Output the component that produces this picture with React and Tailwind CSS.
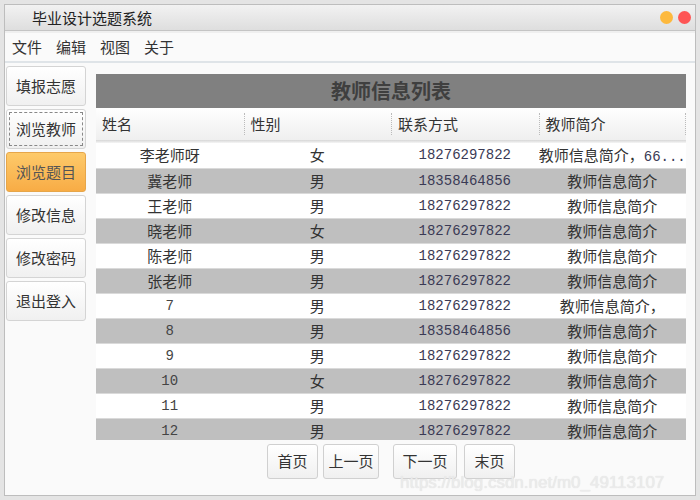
import React from 'react'

const cjk = { fontFamily: '"Noto Sans CJK SC", "Liberation Sans", sans-serif' }
const mono = { fontFamily: '"Liberation Mono", "Noto Sans CJK SC", monospace' }

const teachers = [
  { name: '李老师呀', sex: '女', phone: '18276297822', intro: '教师信息简介，', more: '66...' },
  { name: '冀老师', sex: '男', phone: '18358464856', intro: '教师信息简介' },
  { name: '王老师', sex: '男', phone: '18276297822', intro: '教师信息简介' },
  { name: '晓老师', sex: '女', phone: '18276297822', intro: '教师信息简介' },
  { name: '陈老师', sex: '男', phone: '18276297822', intro: '教师信息简介' },
  { name: '张老师', sex: '男', phone: '18276297822', intro: '教师信息简介' },
  { name: '7', sex: '男', phone: '18276297822', intro: '教师信息简介，' },
  { name: '8', sex: '男', phone: '18358464856', intro: '教师信息简介' },
  { name: '9', sex: '男', phone: '18276297822', intro: '教师信息简介' },
  { name: '10', sex: '女', phone: '18276297822', intro: '教师信息简介' },
  { name: '11', sex: '男', phone: '18276297822', intro: '教师信息简介' },
  { name: '12', sex: '男', phone: '18276297822', intro: '教师信息简介' },
]

const navItems = ['填报志愿', '浏览教师', '浏览题目', '修改信息', '修改密码', '退出登入']

export default function App() {
  return (
    <div className="w-[700px] h-[500px] bg-[#e4e4e4] p-[4px] text-[#333]" style={cjk}>
      <div className="relative h-full border border-[#bdbdbd] bg-[#fafafa] flex flex-col overflow-hidden">
        {/* 标题栏 */}
        <div className="h-[26px] shrink-0 flex items-center justify-between border-b border-[#c4c4c4] bg-gradient-to-b from-[#f2f2f2] to-[#dedede]">
          <span className="pl-[27px] text-[15px] text-[#222] leading-none">毕业设计选题系统</span>
          <div className="flex items-center gap-[5px] pr-[4px]">
            <span className="w-[13px] h-[13px] rounded-full bg-[#fdb93d]" />
            <span className="w-[13px] h-[13px] rounded-full bg-[#fe5555]" />
          </div>
        </div>

        {/* 菜单栏 */}
        <div className="h-[32px] shrink-0 flex items-center gap-[14px] pl-[7px] border-t-2 border-t-[#efefef] border-b-2 border-b-[#dfe4e8] text-[15px] text-[#333]">
          <span>文件</span>
          <span>编辑</span>
          <span>视图</span>
          <span>关于</span>
        </div>

        {/* 主体 */}
        <div className="flex-1 flex pl-[1px]">
          <div className="w-[80px] shrink-0 flex flex-col gap-[3px] pt-[3px]">
            {navItems.map((item, i) => (
              <NavButton key={item} label={item} focused={i === 1} active={i === 2} />
            ))}
          </div>

          <div className="flex-1 ml-[10px] mr-[9px] mt-[11px] flex flex-col">
            <div className="h-[34px] bg-[#808080] flex items-center justify-center text-[20px] font-bold text-[#3f3f3f]">
              教师信息列表
            </div>
            <div className="h-[32px] grid grid-cols-4 bg-gradient-to-b from-[#ffffff] to-[#efefef] text-[15px] text-[#333]">
              {['姓名', '性别', '联系方式', '教师简介'].map((h, i) => (
                <div key={h} className="flex items-center">
                  {i > 0 && <span className="h-[22px] border-l border-dotted border-[#bbbbbb]" />}
                  <span className="pl-[6px]">{h}</span>
                  {i === 3 && <span className="ml-auto h-[22px] border-l border-dotted border-[#bbbbbb]" />}
                </div>
              ))}
            </div>
            <div className="h-[3px] bg-gradient-to-b from-[#d6d6d6] to-[#f6f6f6]" />
            <div className="h-[297px] overflow-hidden">
              {teachers.map((t, i) => {
                const numeric = /^\d+$/.test(t.name)
                return (
                  <div
                    key={i}
                    className={`h-[25px] grid grid-cols-4 items-center text-[15px] ${i % 2 ? 'bg-[#bfbfbf]' : 'bg-white'} ${i === 0 ? '' : 'border-t border-[#dadada]'}`}
                  >
                    <div className={numeric ? 'text-center text-[14px] text-[#444]' : 'text-center'} style={numeric ? mono : undefined}>
                      {t.name}
                    </div>
                    <div className="text-center">{t.sex}</div>
                    <div className="text-center text-[14px] text-[#3a3a55]" style={mono}>{t.phone}</div>
                    <div className="text-center whitespace-nowrap overflow-hidden">
                      {t.intro}
                      {t.more && <span className="text-[14px] text-[#3a3a55]" style={mono}>{t.more}</span>}
                    </div>
                  </div>
                )
              })}
            </div>

            <div className="flex justify-center pt-[4px] text-[15px] text-[#333]">
              <PageButton label="首页" w="w-[51px]" />
              <PageButton label="上一页" w="w-[56px] ml-[5px]" />
              <PageButton label="下一页" w="w-[64px] ml-[14px]" />
              <PageButton label="末页" w="w-[51px] ml-[7px]" />
            </div>
          </div>
        </div>

        <span
          className="absolute left-[395px] top-[465px] text-[17px] text-[#ebebeb] whitespace-nowrap pointer-events-none"
          style={{ fontFamily: '"Liberation Sans", sans-serif', textShadow: '0 0 1px #dcdcdc' }}
        >
          https://blog.csdn.net/m0_49113107
        </span>
      </div>
    </div>
  )
}

function NavButton({ label, focused, active }) {
  if (active) {
    return (
      <div className="h-[40px] rounded-[3px] border border-[#e6a64a] bg-gradient-to-b from-[#fdca6a] to-[#f8ac45] flex items-center justify-center text-[15px] text-[#555]">
        {label}
      </div>
    )
  }
  return (
    <div className="h-[40px] rounded-[3px] border border-[#d4d4d4] bg-gradient-to-b from-[#ffffff] to-[#f0f0f0] flex items-center justify-center text-[15px] text-[#333] p-[2px]">
      <div className={`w-full h-full flex items-center justify-center ${focused ? 'border border-dashed border-[#888]' : ''}`}>
        {label}
      </div>
    </div>
  )
}

function PageButton({ label, w }) {
  return (
    <div className={`${w} h-[35px] rounded-[3px] border border-[#d0d0d0] bg-gradient-to-b from-[#ffffff] to-[#f0f0f0] flex items-center justify-center`}>
      {label}
    </div>
  )
}
